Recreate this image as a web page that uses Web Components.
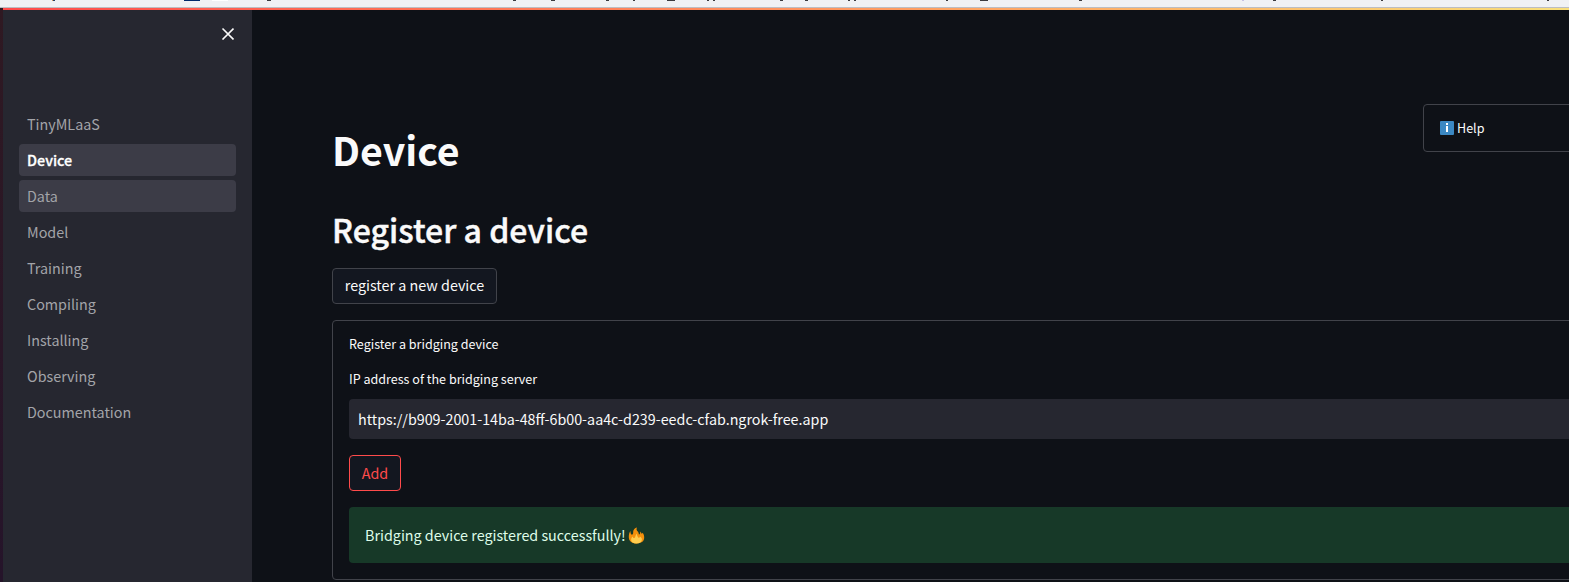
<!DOCTYPE html>
<html lang="en"><head><meta charset="utf-8"><title>Device</title>
<style>
html,body{margin:0;height:100%;overflow:hidden;background:#0e1117}
body{font-family:"Noto Sans CJK SC","Noto Sans",sans-serif;font-size:14.33px;color:#fafafa}
</style></head><body>
<tm-app></tm-app>
<script>
const def=(name,html)=>customElements.define(name,class extends HTMLElement{
  constructor(){super();this.attachShadow({mode:'open'}).innerHTML=html;}
});
def('tm-browser-edge',`<style>:host{display:block;height:7px;background:#f0f1f4;border-bottom:1px solid #bcbdc2}svg{display:block}</style>
<svg width="1569" height="7" shape-rendering="crispEdges"><g fill="#3b3b40"><path d="M267 0h4v1h-4zM513 0h3v1h-3zM551 0h4v1h-4zM606 0h3v1h-3zM633 0h2v1h-2zM667 0h8v1h-8zM707 0h2v1h-2zM713 0h2v1h-2zM780 0h3v1h-3zM805 0h3v1h-3zM848 0h2v1h-2zM854 0h2v1h-2zM946 0h2v1h-2zM980 0h8v1h-8zM1079 0h3v1h-3zM1273 0h3v1h-3zM1381 0h2v1h-2zM1547 0h2v1h-2z"/></g><path fill="#d59a56" d="M52 0h1v1h-1z"/><path fill="#263d63" d="M53 0h2v1h-2z"/><path fill="#00296b" d="M184 0h16v1h-16z"/><path fill="#fff" d="M212 0h16v1h-16z"/><path fill="#c5c1e5" d="M1242 0h2v1h-2z"/></svg>`);
def('tm-nav-item',`<style>:host{display:flex;align-items:center;height:32px;padding:0 8px;border-radius:4px;color:#a3a4a9;line-height:32px;white-space:nowrap}
:host([active]){background:#3c3c47;color:#fff;font-weight:500;-webkit-text-stroke:.3px #fff}:host([hovered]){background:#3c3c47}</style><slot></slot>`);
def('tm-sidebar',`<style>:host{display:flex;flex-direction:column;width:249px;flex:none;box-sizing:border-box;background:#262730;padding:16px}
.top{height:82px;display:flex;justify-content:flex-end;align-items:flex-start}svg{display:block;margin:1px 2px 0 0}nav{display:flex;flex-direction:column;gap:4px}</style>
<div class="top"><svg width="13" height="13" viewBox="0 0 13 13"><path d="M1.5 1.5l11 11M12.5 1.5l-11 11" stroke="#fafafa" stroke-width="1.6"/></svg></div><nav><slot></slot></nav>`);
def('tm-button',`<style>:host{display:flex;align-items:center;justify-content:center;box-sizing:border-box;height:36px;width:165px;border:1px solid #41434a;border-radius:4px;background:#131720;color:#fafafa;line-height:20px;white-space:nowrap}
span{padding-bottom:2px}:host([danger]){width:52px;border-color:#ff4b4b;color:#ff4b4b}:host([danger]) span{padding-bottom:0}</style><span><slot></slot></span>`);
def('tm-help',`<style>:host{display:flex;align-items:center;box-sizing:border-box;width:190px;flex:none;height:48px;border:1px solid #41434a;border-radius:4px;padding-left:16px;font-size:12.55px;line-height:18px;gap:3px}svg{display:block}</style>
<svg width="14" height="14" viewBox="0 0 14 14"><rect width="14" height="14" rx="1" fill="#3b88c3"/><path fill="#fff" d="M6 2h2v2H6zM6 5h2v6H6z"/></svg><span><slot></slot></span>`);
def('tm-input',`<style>:host{display:flex;align-items:center;height:40px;background:#262730;border-radius:4px;padding-left:9px;line-height:20px;white-space:nowrap}</style><span><slot></slot></span>`);
def('tm-alert',`<style>:host{display:flex;align-items:center;height:56px;background:#173928;border-radius:4px;padding-left:16px;color:#dffde9;line-height:20px;gap:2px}svg{display:block}</style><span><slot></slot></span>
<svg width="17" height="17" viewBox="0 0 17 17"><path fill="#f4900c" d="M8.6 16.5C3.8 16.5.7 13.7.8 9.9.8 7.5 1.3 5.3 2.4 4c0 1.8.4 3.4 1.5 3.7C5.3 7.8 5.2 5.6 5.2 4.5 5.3 2.4 6.8.8 9 .4 8.1 2 8.6 3.3 9.8 4.6c.8.8 1 1.9 1.1 2.9 1.3-.2 1.5-1.7 1.2-3 .8.5 1.3 1.3 1.5 2.2.5 0 .8-.4.9-1 1.3 1.4 1.8 3.1 1.7 5.1-.1 3.6-3.2 5.7-7.6 5.7z"/><path fill="#ffcc4d" d="M8.5 16.5c-3.4 0-5.5-1.5-5.4-3.7.1-1.5.8-2.5 1.7-3.2 0 1 .7 1.8 1.5 1.4C7.8 10.3 7 8.2 9 6.7c-.2 1.7.5 2.6 1.1 3.5.8 1.1 1.7.4 1.8-.7 1.5.9 2.1 2 2 3.3-.2 2.2-2.3 3.7-5.4 3.7z"/></svg>`);
def('tm-form',`<style>:host{display:block;box-sizing:border-box;height:260px;width:1300px;border:1px solid #41434a;border-radius:4px;padding:13px 16px;font-size:12.55px}
.l{height:20px;line-height:20px}.l+.l{margin:15px 0 10px}tm-input,tm-button,tm-alert{font-size:14.33px}tm-input{font-size:14.31px}tm-button{margin:16px 0}</style>
<div class="l">Register a bridging device</div><div class="l">IP address of the bridging server</div>
<tm-input>https://b909-2001-14ba-48ff-6b00-aa4c-d239-eedc-cfab.ngrok-free.app</tm-input><tm-button danger>Add</tm-button><tm-alert>Bridging device registered successfully!</tm-alert>`);
def('tm-main',`<style>:host{display:block;flex:1;min-width:0;overflow:hidden;padding:94px 0 0 80px;background:#0e1117}
.row{display:flex;justify-content:space-between;height:104px;width:1281px}h1,h2{margin:0;white-space:nowrap}h1{font-size:39.3px;line-height:53px;padding-top:18px;font-weight:700}h2{font-size:32.05px;line-height:43px;font-weight:500;-webkit-text-stroke:.45px #fafafa;margin-bottom:17px}tm-form{margin-top:16px}</style>
<div class="row"><h1>Device</h1><tm-help>Help</tm-help></div><h2>Register a device</h2><tm-button>register a new device</tm-button><tm-form></tm-form>`);
def('tm-app',`<style>:host{display:flex;flex-direction:column;height:100vh}.body{display:flex;flex:1;min-height:0;background:linear-gradient(#2f1922,#25142a)}.view{margin-left:3px;flex:1;min-width:0;display:flex;flex-direction:column}.bar{height:2px;background:linear-gradient(90deg,#ff4b4b,#ffa764 65%,#f8df7c)}.cols{display:flex;flex:1;min-height:0}</style>
<tm-browser-edge></tm-browser-edge><div class="body"><div class="view"><div class="bar"></div><div class="cols"><tm-sidebar><tm-nav-item>TinyMLaaS</tm-nav-item><tm-nav-item active>Device</tm-nav-item><tm-nav-item hovered>Data</tm-nav-item><tm-nav-item>Model</tm-nav-item><tm-nav-item>Training</tm-nav-item><tm-nav-item>Compiling</tm-nav-item><tm-nav-item>Installing</tm-nav-item><tm-nav-item>Observing</tm-nav-item><tm-nav-item>Documentation</tm-nav-item></tm-sidebar><tm-main></tm-main></div></div></div>`);
</script></body></html>
